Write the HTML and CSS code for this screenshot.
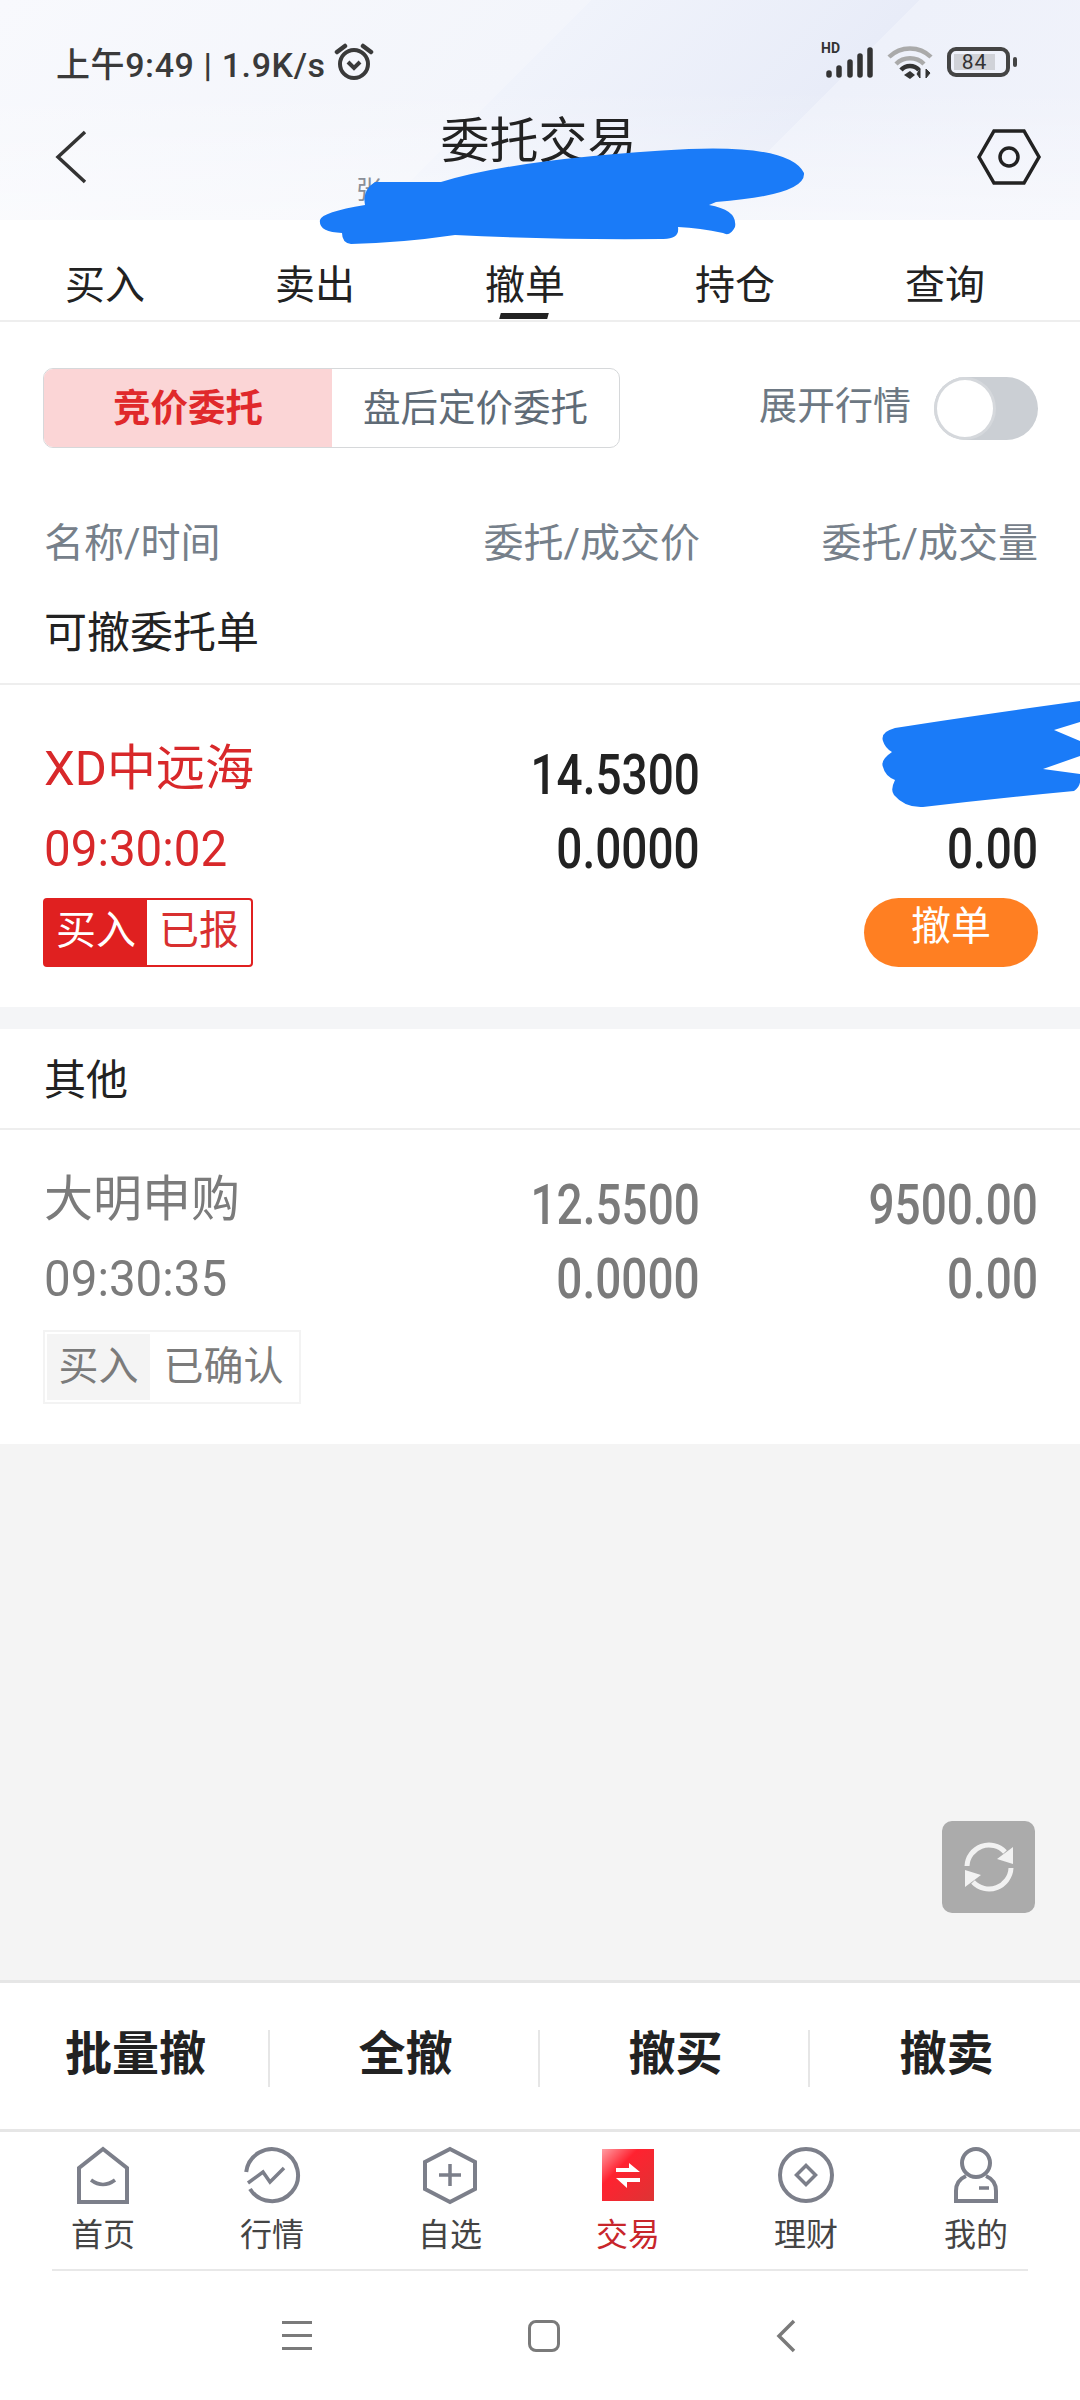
FILE: index.html
```html
<!DOCTYPE html>
<html lang="zh-CN">
<head>
  <meta charset="UTF-8" />
  <title>委托交易</title>
  <meta name="viewport" content="width=device-width, initial-scale=1.0">
  <link rel="stylesheet" href="styles.css">
</head>
<body>
  <div class="page">

    <!-- Cabecalho -->
    <header class="header">
      <div class="status">
        <div class="status-left">
          <span>上午9:49 | 1.9K/s</span>
          <svg class="alarm" viewBox="0 0 40 40" width="40" height="40">
            <circle cx="20" cy="22" r="14" fill="none" stroke="#3a3a3a" stroke-width="4"/>
            <path d="M3 10 L11 4 M37 10 L29 4" stroke="#3a3a3a" stroke-width="4.5" stroke-linecap="round"/>
            <path d="M14 20 L20 26 L26 20" fill="none" stroke="#3a3a3a" stroke-width="4"/>
          </svg>
        </div>
        <div class="status-right">
          <div class="signal">
            <span class="hd">HD</span>
            <svg viewBox="0 0 52 32" width="52" height="32">
              <path d="M6 29 V27 M16 29 V22 M27 29 V16 M37 29 V10 M47 29 V4" stroke="#333" stroke-width="5.5" stroke-linecap="round"/>
            </svg>
          </div>
          <svg class="wifi" viewBox="0 0 46 34" width="46" height="34">
            <path d="M2 12 A30 30 0 0 1 44 12" fill="none" stroke="#aaa" stroke-width="4.5"/>
            <path d="M9 19 A20 20 0 0 1 37 19" fill="none" stroke="#aaa" stroke-width="4.5"/>
            <path d="M14 25 A12 12 0 0 1 32 25" fill="none" stroke="#333" stroke-width="4.5"/>
            <path d="M17 30 L23 26 L28 30 L23 34 Z" fill="#333"/>
            <path d="M33 24 V33 L30 29 Z M39 33 V24 L43 28 Z" fill="#333" stroke="#333"/>
          </svg>
          <div class="battery"><span class="battery-level">84</span></div>
          <div class="battery-tip"></div>
        </div>
      </div>

      <div class="titlebar">
        <svg class="back" viewBox="0 0 36 56" width="36" height="56">
          <path d="M30 3 L3 28 L30 53" fill="none" stroke="#333" stroke-width="3.5"/>
        </svg>
        <div class="title-box">
          <h1 class="title">委托交易</h1>
          <div class="subtitle">张</div>
        </div>
        <svg class="gear" viewBox="0 0 66 58" width="66" height="58">
          <path d="M3 29 L18 3 H48 L63 29 L48 55 H18 Z" fill="none" stroke="#222" stroke-width="3.5"/>
          <circle cx="33" cy="29" r="9" fill="none" stroke="#222" stroke-width="3.5"/>
        </svg>
      </div>
    </header>

    <!-- Abas -->
    <nav class="tabs">
      <div class="tab">买入</div>
      <div class="tab">卖出</div>
      <div class="tab tab-active">撤单</div>
      <div class="tab">持仓</div>
      <div class="tab">查询</div>
    </nav>

    <main class="content">
      <div class="controls">
        <div class="segment">
          <div class="segment-item segment-on">竞价委托</div>
          <div class="segment-item">盘后定价委托</div>
        </div>
        <div class="expand">
          <span>展开行情</span>
          <div class="toggle"><div class="knob"></div></div>
        </div>
      </div>

      <div class="cols head">
        <div>名称/时间</div>
        <div class="right">委托/成交价</div>
        <div class="right">委托/成交量</div>
      </div>

      <div class="section-title first-title">可撤委托单</div>

      <!-- Ordem que pode ser cancelada -->
      <div class="row row-live">
        <div class="cols line">
          <div class="name">XD中远海</div>
          <div class="right"><span class="num">14.5300</span></div>
          <div class="right"></div>
        </div>
        <div class="cols line">
          <div><span class="time">09:30:02</span></div>
          <div class="right"><span class="num">0.0000</span></div>
          <div class="right"><span class="num">0.00</span></div>
        </div>
        <div class="row-foot">
          <div class="tag tag-red">
            <span class="tag-side">买入</span>
            <span class="tag-state">已报</span>
          </div>
          <div class="cancel-btn">撤单</div>
        </div>
      </div>

      <div class="gap"></div>

      <div class="section-title other-title">其他</div>

      <div class="row row-done">
        <div class="cols line">
          <div class="name">大明申购</div>
          <div class="right"><span class="num">12.5500</span></div>
          <div class="right"><span class="num">9500.00</span></div>
        </div>
        <div class="cols line">
          <div><span class="time">09:30:35</span></div>
          <div class="right"><span class="num">0.0000</span></div>
          <div class="right"><span class="num">0.00</span></div>
        </div>
        <div class="row-foot">
          <div class="tag tag-grey">
            <span class="tag-side">买入</span>
            <span class="tag-state">已确认</span>
          </div>
        </div>
      </div>

      <div class="empty">
        <div class="refresh">
          <svg viewBox="0 0 56 56" width="56" height="56">
            <path d="M6 27 A22 22 0 0 1 44 13" fill="none" stroke="#f2f2f2" stroke-width="5"/>
            <path d="M50 29 A22 22 0 0 1 12 43" fill="none" stroke="#f2f2f2" stroke-width="5"/>
            <path d="M52 8 L52 25 L36 20 Z M4 48 L4 31 L20 36 Z" fill="#f2f2f2"/>
          </svg>
        </div>
      </div>
    </main>

    <!-- Acoes em lote -->
    <div class="batch">
      <div class="batch-item">批量撤</div>
      <div class="batch-item">全撤</div>
      <div class="batch-item">撤买</div>
      <div class="batch-item">撤卖</div>
    </div>

    <!-- Navegacao inferior -->
    <div class="bottom-nav">
      <div class="nav-item nav-first">
        <svg viewBox="0 0 64 64" width="64" height="64">
          <path d="M32 6 L56 25 V59 H8 V25 Z" fill="none" stroke="#7c7f8a" stroke-width="4"/>
          <path d="M20 37 Q32 46 44 37" fill="none" stroke="#7c7f8a" stroke-width="3.5"/>
        </svg>
        <span>首页</span>
      </div>
      <div class="nav-item">
        <svg viewBox="0 0 64 64" width="64" height="64">
          <path d="M6.2 29 A26 26 0 1 1 10 46" fill="none" stroke="#7c7f8a" stroke-width="4"/>
          <path d="M8 40 L23 29 L30 39 L44 25" fill="none" stroke="#7c7f8a" stroke-width="3.5"/>
        </svg>
        <span>行情</span>
      </div>
      <div class="nav-item">
        <svg viewBox="0 0 64 64" width="64" height="64">
          <path d="M32 6 L57 19 V46 L32 59 L7 46 V19 Z" fill="none" stroke="#7c7f8a" stroke-width="4"/>
          <path d="M32 21 V43 M21 32 H43" stroke="#7c7f8a" stroke-width="3.5"/>
        </svg>
        <span>自选</span>
      </div>
      <div class="nav-item nav-on">
        <svg viewBox="0 0 64 64" width="64" height="64">
          <defs>
            <linearGradient id="tradeFill" x1="0" y1="0" x2="1" y2="1">
              <stop offset="0" stop-color="#ff9ea4"/>
              <stop offset="0.35" stop-color="#ff2230"/>
              <stop offset="1" stop-color="#dd3434"/>
            </linearGradient>
          </defs>
          <rect x="6" y="6" width="52" height="52" fill="url(#tradeFill)"/>
          <path d="M20 25 H33 V20 L44 29 H20 Z M44 35 V39 H31 V45 L20 35 Z" fill="#fff"/>
        </svg>
        <span>交易</span>
      </div>
      <div class="nav-item">
        <svg viewBox="0 0 64 64" width="64" height="64">
          <circle cx="32" cy="32" r="26" fill="none" stroke="#7c7f8a" stroke-width="4"/>
          <path d="M32 22.5 L41.5 32 L32 41.5 L22.5 32 Z" fill="none" stroke="#7c7f8a" stroke-width="3.5"/>
        </svg>
        <span>理财</span>
      </div>
      <div class="nav-item nav-last">
        <svg viewBox="0 0 64 64" width="64" height="64">
          <circle cx="32" cy="20" r="14" fill="none" stroke="#7c7f8a" stroke-width="4"/>
          <path d="M22 33 C15 36 12 41 12 48 V58 H52 V48 C52 41 49 36 42 33" fill="none" stroke="#7c7f8a" stroke-width="4"/>
          <path d="M35 45 H45" stroke="#7c7f8a" stroke-width="3.5"/>
        </svg>
        <span>我的</span>
      </div>
    </div>

    <!-- Barra do sistema -->
    <div class="sys-bar">
      <div class="sys-menu"><i></i><i></i><i></i></div>
      <div class="sys-home"></div>
      <svg viewBox="0 0 20 34" width="20" height="34">
        <path d="M18 2 L3 17 L18 32" fill="none" stroke="#7a7a7a" stroke-width="3.5"/>
      </svg>
    </div>

    <!-- Rabiscos azuis por cima dos dados -->
    <svg class="scribble" viewBox="0 0 1080 820" width="1080" height="820">
      <path fill="#1a7bf8" d="M320 220 Q322 212 365 205 Q362 190 375 182 L441 182 Q520 158 689 149 Q790 145 804 173 Q806 195 716 202 L709 205 Q738 210 735 227 Q730 237 723 233 Q700 228 678 227 Q680 240 661 239 Q550 240 455 235 Q400 243 351 244 Q342 243 342 233 Q318 232 320 220 Z"/>
      <path fill="#1a7bf8" d="M1080 701 Q964 717 895 728 Q880 732 883 741 Q885 748 892 752 Q880 760 883 767 Q885 776 895 780 Q890 790 894 795 Q905 808 923 807 Q1000 798 1074 791 Q1082 786 1080 774 L1043 769 L1080 756 L1080 741 L1054 730 L1080 722 Z"/>
    </svg>
  </div>
</body>
</html>
```

FILE: styles.css
```css
* {
  box-sizing: border-box;
}

body {
  margin: 0;
  font-family: Roboto, "Noto Sans CJK SC", sans-serif;
  color: #222;
  background: #fff;
}

.page {
  position: relative;
  width: 1080px;
  height: 2400px;
  display: flex;
  flex-direction: column;
  overflow: hidden;
  background: #fff;
}

/* header */
.header {
  height: 220px;
  padding-top: 26px;
  background:
    linear-gradient(to bottom, rgba(255, 255, 255, 0) 40%, rgba(255, 255, 255, 0.45) 100%),
    linear-gradient(135deg, #f8f9fd 0, #f3f5fb 418px, #f0f3fb 418px, #e8ecf8 650px, #eef1fa 650px, #f1f3fb 100%);
}

.status {
  height: 74px;
  display: flex;
  justify-content: space-between;
  align-items: center;
  padding: 0 63px 2px 56px;
}

.status-left {
  display: flex;
  align-items: center;
  gap: 8px;
  font-size: 34px;
  font-weight: 500;
  letter-spacing: 0.6px;
  color: #3a3a3a;
}

.status-right {
  display: flex;
  align-items: center;
}

.signal {
  position: relative;
  width: 52px;
  height: 32px;
  margin-right: 12px;
}

.hd {
  position: absolute;
  left: -2px;
  top: -5px;
  font-size: 14px;
  line-height: 14px;
  font-weight: 700;
  color: #333;
}

.signal svg {
  display: block;
}

.wifi {
  margin-right: 14px;
}

.battery {
  width: 63px;
  height: 30px;
  border: 4px solid #444;
  border-radius: 9px;
  padding: 3px;
}

.battery-level {
  display: block;
  width: 41px;
  height: 16px;
  background: #d0d2d8;
  font-size: 21px;
  line-height: 16px;
  letter-spacing: 1px;
  text-align: center;
  color: #333;
}

.battery-tip {
  width: 4px;
  height: 10px;
  margin-left: 3px;
  border-radius: 2px;
  background: #444;
}

.titlebar {
  height: 114px;
  display: grid;
  grid-template-columns: 1fr 365px 1fr;
  align-items: center;
  padding: 0 38px 0 35px;
}

.back {
  margin-left: 20px;
}

.gear {
  justify-self: end;
}

.title-box {
  align-self: start;
}

.title {
  margin: 11px 0 0;
  font-size: 49px;
  line-height: 62px;
  font-weight: 400;
  text-align: center;
  color: #222;
}

.subtitle {
  font-size: 26px;
  line-height: 34px;
  color: #8a8f98;
}

/* tabs */
.tabs {
  height: 102px;
  display: grid;
  grid-template-columns: repeat(5, 210px);
  border-bottom: 2px solid #eeeeee;
  background: #fff;
}

.tab {
  position: relative;
  padding-top: 37px;
  font-size: 40px;
  line-height: 58px;
  text-align: center;
}

.tab-active::after {
  content: "";
  position: absolute;
  left: 80px;
  top: 93px;
  width: 48px;
  height: 6px;
  background: #222;
  transform: skewX(-15deg);
}

/* content */
.content {
  flex: 1;
  display: flex;
  flex-direction: column;
}

.controls {
  display: flex;
  justify-content: space-between;
  align-items: center;
  padding: 46px 42px 0 43px;
}

.segment {
  width: 577px;
  height: 80px;
  display: flex;
  border: 1px solid #d6d8da;
  border-radius: 10px;
  overflow: hidden;
}

.segment-item {
  flex: 1;
  font-size: 37.5px;
  line-height: 78px;
  text-align: center;
  color: #5f6b76;
}

.segment-on {
  flex: 0 0 288px;
  background: #fbd5d6;
  color: #e0292b;
  font-weight: 700;
}

.expand {
  display: flex;
  align-items: center;
  gap: 23px;
  font-size: 38px;
  line-height: 50px;
  color: #6d7883;
}

.expand span {
  margin-bottom: 5px;
}

.toggle {
  width: 104px;
  height: 63px;
  border-radius: 32px;
  background: #cbcfd4;
}

.knob {
  width: 62px;
  height: 63px;
  border-radius: 50%;
  background: #fff;
  border: 3px solid #d5d8dc;
}

.cols {
  display: grid;
  grid-template-columns: 1fr 251px 338px;
  padding: 0 42px 0 44px;
}

.right {
  text-align: right;
}

.head {
  margin-top: 67px;
  font-size: 40px;
  line-height: 58px;
  color: #76808a;
}

.section-title {
  padding: 0 44px;
  color: #222;
  border-bottom: 2px solid #eeeeee;
}

.first-title {
  height: 112px;
  padding-top: 30px;
  font-size: 43px;
  line-height: 60px;
}

.other-title {
  height: 101px;
  padding-top: 22px;
  font-size: 42px;
  line-height: 60px;
}

.row {
  background: #fff;
}

.row-live {
  height: 322px;
  padding-top: 53px;
}

.row-done {
  height: 314px;
  padding-top: 38px;
}

.line {
  height: 74px;
  line-height: 74px;
}

.name {
  font-size: 49px;
  line-height: 62px;
  white-space: nowrap;
}

.row-done .name {
  line-height: 64px;
}

.num {
  display: inline-block;
  font-size: 55px;
  font-weight: 500;
  transform: scaleX(0.835);
  transform-origin: right center;
}

.time {
  display: inline-block;
  font-size: 50px;
  transform: scaleX(0.95);
  transform-origin: left center;
}

.row-foot {
  display: flex;
  justify-content: space-between;
  padding: 12px 42px 0 43px;
}

.row-done .row-foot {
  padding-top: 14px;
}

.tag {
  display: flex;
  font-size: 40px;
  text-align: center;
}

.tag-side {
  display: block;
}

.tag-state {
  display: block;
}

.tag-red {
  height: 69px;
  width: 210px;
  border: 2px solid #e02020;
  border-radius: 4px;
  line-height: 62px;
}

.tag-red .tag-side {
  width: 102px;
  background: #e02020;
  color: #fff;
}

.tag-red .tag-state {
  flex: 1;
  color: #d83030;
}

.tag-grey {
  height: 74px;
  width: 258px;
  padding: 2px;
  border: 2px solid #f3f3f3;
  line-height: 66px;
  color: #7b7b7b;
}

.tag-grey .tag-side {
  width: 103px;
  background: #f4f4f4;
}

.tag-grey .tag-state {
  flex: 1;
}

.cancel-btn {
  width: 174px;
  height: 69px;
  border-radius: 35px;
  background: #ff7f22;
  color: #fff;
  font-size: 40px;
  line-height: 58px;
  text-align: center;
}

.row-live .name,
.row-live .time {
  color: #d8282a;
}

.row-done .name,
.row-done .time,
.row-done .num {
  color: #7b7b7b;
}

.gap {
  height: 22px;
  background: #f4f5f7;
}

.empty {
  position: relative;
  flex: 1;
  background: #f4f4f4;
}

.refresh {
  position: absolute;
  right: 45px;
  top: 377px;
  width: 93px;
  height: 92px;
  display: flex;
  align-items: center;
  justify-content: center;
  border-radius: 10px;
  background: #ababab;
}

/* batch bar */
.batch {
  height: 152px;
  display: grid;
  grid-template-columns: repeat(4, 270px);
  border-top: 3px solid #e6e6e6;
  border-bottom: 3px solid #e6e6e6;
  padding-top: 47px;
  background: #fff;
}

.batch-item {
  height: 57px;
  padding-left: 3px;
  border-right: 2px solid #e6e6e6;
  font-size: 47px;
  font-weight: 700;
  line-height: 48px;
  text-align: center;
}

.batch-item:last-child {
  border-right: none;
}

/* bottom nav */
.bottom-nav {
  position: relative;
  height: 139px;
  display: grid;
  grid-template-columns: repeat(6, 178px);
  padding-left: 5px;
  padding-top: 11px;
}

.bottom-nav::after {
  content: "";
  position: absolute;
  left: 52px;
  right: 52px;
  bottom: 0;
  height: 2px;
  background: #e8e8e8;
}

.nav-item {
  display: flex;
  flex-direction: column;
  align-items: center;
  font-size: 32px;
  line-height: 44px;
  color: #444;
}

.nav-first {
  padding-left: 18px;
}

.nav-last {
  padding-right: 16px;
}

.nav-on {
  color: #c8262b;
}

.nav-item svg {
  display: block;
  margin-bottom: 6px;
}

/* system bar */
.sys-bar {
  height: 129px;
  display: grid;
  grid-template-columns: 30px 32px 20px;
  justify-content: space-between;
  align-items: center;
  padding: 0 284px 0 282px;
}

.sys-menu {
  display: flex;
  flex-direction: column;
  gap: 10px;
}

.sys-menu i {
  display: block;
  height: 3px;
  background: #7a7a7a;
}

.sys-home {
  width: 32px;
  height: 32px;
  border: 3.5px solid #7a7a7a;
  border-radius: 8px;
}

.scribble {
  position: absolute;
  left: 0;
  top: 0;
  pointer-events: none;
}
```
